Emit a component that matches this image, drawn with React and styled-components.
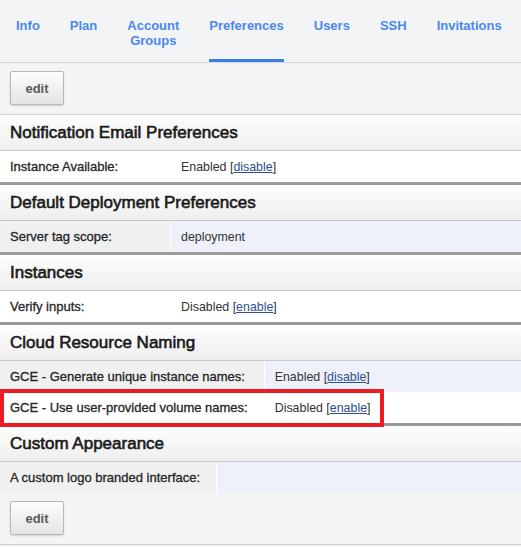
import React from "react";
import styled, { createGlobalStyle } from "styled-components";

const GlobalStyle = createGlobalStyle`
  body {
    margin: 0;
    background: #f3f4f6;
    font-family: "Liberation Sans", Arial, sans-serif;
    color: #333;
  }
`;

const TabBar = styled.nav`
  display: flex;
  align-items: stretch;
  height: 62px;
  padding: 0 1px;
  border-bottom: 1px solid #d3d6dc;
  background: #f3f4f6;
`;

const Tab = styled.a`
  box-sizing: border-box;
  margin: 0 15px;
  padding-top: 18px;
  font-size: 13px;
  line-height: 15px;
  font-weight: bold;
  text-align: center;
  color: #4a88f0;
  text-decoration: none;
  white-space: nowrap;
  border-bottom: 3px solid ${(p) => (p.$active ? "#3b7de0" : "transparent")};
`;

const Toolbar = styled.div`
  padding: 8px 10px 9px;
  border-bottom: 1px solid #cfd2d7;
  background: #f3f4f6;
`;

const Button = styled.button`
  width: 54px;
  height: 34px;
  padding: 0;
  font-family: inherit;
  font-size: 13px;
  font-weight: bold;
  color: #5a5a5a;
  background: linear-gradient(#fdfdfd, #e4e4e4);
  border: 1px solid #b8b8b8;
  border-radius: 2px;
  box-shadow: 0 1px 2px rgba(0, 0, 0, 0.15);
`;

const Section = styled.section`
  background: #fff;
  border-bottom: ${(p) => (p.$last ? "none" : "3px solid #9a9a9a")};
`;

const SectionTitle = styled.h3`
  margin: 0;
  height: 35px;
  padding: 0 10px;
  display: flex;
  align-items: center;
  font-size: 17px;
  font-weight: normal;
  color: #1a1a1a;
  -webkit-text-stroke: 0.6px #1a1a1a;
  background: linear-gradient(#fefefe, #eeeeee);
  border-bottom: 1px solid #c9c9c9;
`;

const Table = styled.table`
  width: 100%;
  border-collapse: separate;
  border-spacing: 0;
`;

const Row = styled.tr`
  height: 31px;
`;

const Label = styled.td`
  position: relative;
  width: 144px;
  padding: 0 16px 0 10px;
  white-space: nowrap;
  font-size: 13px;
  color: #262626;
  -webkit-text-stroke: 0.3px #262626;
  background: ${(p) => (p.$shaded ? "#f0f0f0" : "#fff")};
`;

const Value = styled.td`
  padding: 0 10px;
  font-size: 12.4px;
  color: #333;
  background: ${(p) => (p.$shaded ? "#eef1f9" : "#fff")};
  border-left: 1px solid #fff;
`;

const Link = styled.a`
  color: #2d4f8f;
  text-decoration: underline;
`;

const Highlight = styled.div`
  position: absolute;
  left: 0;
  top: -3px;
  width: 384px;
  height: 38px;
  box-sizing: border-box;
  border: 4px solid #ec1c24;
  pointer-events: none;
`;

const tabs = [
  { label: "Info" },
  { label: "Plan" },
  { label: ["Account", "Groups"] },
  { label: "Preferences", active: true },
  { label: "Users" },
  { label: "SSH" },
  { label: "Invitations" },
];

const sections = [
  {
    title: "Notification Email Preferences",
    rows: [{ label: "Instance Available:", state: "Enabled", action: "disable" }],
  },
  {
    title: "Default Deployment Preferences",
    rows: [{ label: "Server tag scope:", text: "deployment", shaded: true }],
  },
  {
    title: "Instances",
    rows: [{ label: "Verify inputs:", state: "Disabled", action: "enable" }],
  },
  {
    title: "Cloud Resource Naming",
    rows: [
      { label: "GCE - Generate unique instance names:", state: "Enabled", action: "disable", shaded: true },
      { label: "GCE - Use user-provided volume names:", state: "Disabled", action: "enable", marked: true },
    ],
  },
  {
    title: "Custom Appearance",
    rows: [{ label: "A custom logo branded interface:", text: "", shaded: true, wide: true }],
  },
];

export default function App() {
  return (
    <>
      <GlobalStyle />
      <TabBar>
        {tabs.map((t, i) => (
          <Tab key={i} href="#" $active={t.active}>
            {Array.isArray(t.label) ? (
              <>
                {t.label[0]}
                <br />
                {t.label[1]}
              </>
            ) : (
              t.label
            )}
          </Tab>
        ))}
      </TabBar>
      <Toolbar>
        <Button>edit</Button>
      </Toolbar>
      {sections.map((s, i) => (
        <Section key={s.title} $last={i === sections.length - 1}>
          <SectionTitle>{s.title}</SectionTitle>
          <Table>
            <tbody>
              {s.rows.map((r) => (
                <Row key={r.label}>
                  <Label $shaded={r.shaded}>
                    {r.label}
                    {r.marked && <Highlight />}
                  </Label>
                  <Value $shaded={r.shaded}>
                    {r.action ? (
                      <>
                        {r.state} [<Link href="#">{r.action}</Link>]
                      </>
                    ) : (
                      r.text
                    )}
                  </Value>
                </Row>
              ))}
            </tbody>
          </Table>
        </Section>
      ))}
      <Toolbar>
        <Button>edit</Button>
      </Toolbar>
    </>
  );
}
